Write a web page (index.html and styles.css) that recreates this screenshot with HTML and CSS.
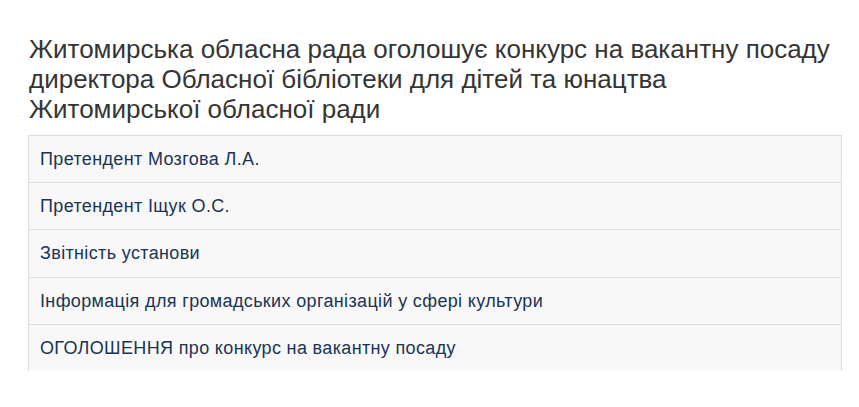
FILE: index.html
```html
<!DOCTYPE html>
<html lang="uk">
<head>
<meta charset="utf-8">
<link rel="stylesheet" href="styles.css">
</head>
<body>
<div class="page">
  <h1 class="title">Житомирська обласна рада оголошує конкурс на вакантну посаду директора Обласної бібліотеки для дітей та юнацтва Житомирської обласної ради</h1>
  <div class="list">
    <a class="item" href="#">Претендент Мозгова Л.А.</a>
    <a class="item" href="#">Претендент Іщук О.С.</a>
    <a class="item" href="#">Звітність установи</a>
    <a class="item" href="#">Інформація для громадських організацій у сфері культури</a>
    <a class="item" href="#">ОГОЛОШЕННЯ про конкурс на вакантну посаду</a>
  </div>
</div>
</body>
</html>
```

FILE: styles.css
```css
html, body {
  margin: 0;
  padding: 0;
  background: #ffffff;
}
body {
  font-family: "Liberation Sans", Arial, sans-serif;
}
.page {
  width: 814px;
  padding: 34px 0 0 28px;
}
.title {
  width: 812px;
  margin: 0 0 11px 1px;
  font-size: 26px;
  line-height: 30px;
  font-weight: normal;
  color: #353535;
}
.list {
  display: flex;
  flex-direction: column;
}
.item {
  display: block;
  padding: 10px 11px;
  font-size: 18px;
  line-height: 26.2px;
  letter-spacing: 0.35px;
  color: #1a3454;
  text-decoration: none;
  background: #f8f8f8;
  border: 1px solid #dcdcdc;
  margin-bottom: -1px;
}
```
